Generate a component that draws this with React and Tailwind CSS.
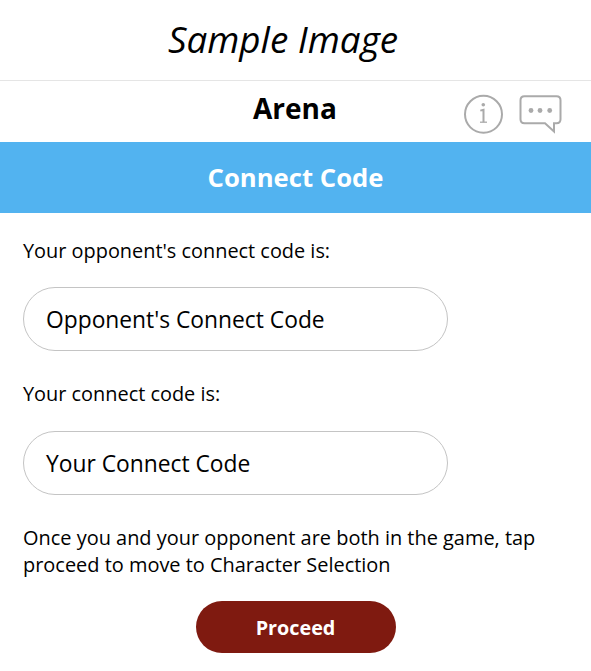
export default function App() {
  return (
    <div className="flex h-[671px] w-[591px] flex-col overflow-hidden bg-white font-['Open_Sans','Noto_Sans',sans-serif] text-black">
      <div className="flex h-[81px] shrink-0 items-center justify-center border-b border-[#e5e5e5] pr-[25px] text-[36.8px] italic">
        <span className="whitespace-nowrap">Sample Image</span>
      </div>
      <header className="grid h-[61px] shrink-0 grid-cols-[1fr_auto_1fr]">
        <div />
        <h1 className="pt-[8px] pr-px text-[28px] leading-[38px] font-bold">Arena</h1>
        <div className="flex justify-end gap-[15px] pt-[13px] pr-[27px]">
          <svg className="overflow-visible" width="40" height="40" viewBox="0 0 40 40" fill="none" stroke="#aaa" strokeWidth="2">
            <circle cx="18.5" cy="20.3" r="18.5" />
            <path d="M15.3 16.6l3.2-.9v12.5" strokeWidth="2" />
            <path d="M15 28.2h7" strokeWidth="1.3" />
            <circle cx="18.3" cy="10.7" r="1.8" fill="#aaa" stroke="none" />
          </svg>
          <svg className="overflow-visible" width="44" height="40" viewBox="0 0 44 40" fill="none" stroke="#aaa" strokeWidth="2">
            <path d="M4.5 2.2h32q4 0 4 4v19q0 4-4 4h-2.5v8.3l-9-8.3H4.5q-4 0-4-4v-19q0-4 4-4z" />
            <g fill="#aaa" stroke="none">
              <circle cx="11" cy="16.5" r="2.4" />
              <circle cx="20" cy="16.5" r="2.4" />
              <circle cx="29.7" cy="16.5" r="2.4" />
            </g>
          </svg>
        </div>
      </header>
      <div className="flex h-[71px] shrink-0 items-center justify-center bg-[#52b3f0] pt-px text-[25.7px] font-bold text-white">Connect Code</div>
      <main className="flex flex-col px-[23px] pt-6 text-[19.9px] leading-[27px]">
        <p>Your opponent's connect code is:</p>
        <div className="mt-[23px] flex h-16 w-[425px] items-center rounded-full border border-[#c4c4c4] px-[22px] text-[22.8px]">Opponent's Connect Code</div>
        <p className="mt-[29px]">Your connect code is:</p>
        <div className="mt-[24px] flex h-16 w-[425px] items-center rounded-full border border-[#c4c4c4] px-[22px] text-[22.8px]">Your Connect Code</div>
        <p className="mt-[29px] text-[19.95px]">Once you and your opponent are both in the game, tap<br />proceed to move to Character Selection</p>
        <button className="mt-[23px] h-[52px] w-[200px] self-center rounded-full bg-[#7f1a10] text-[19.8px] font-bold text-white">Proceed</button>
      </main>
    </div>
  );
}
